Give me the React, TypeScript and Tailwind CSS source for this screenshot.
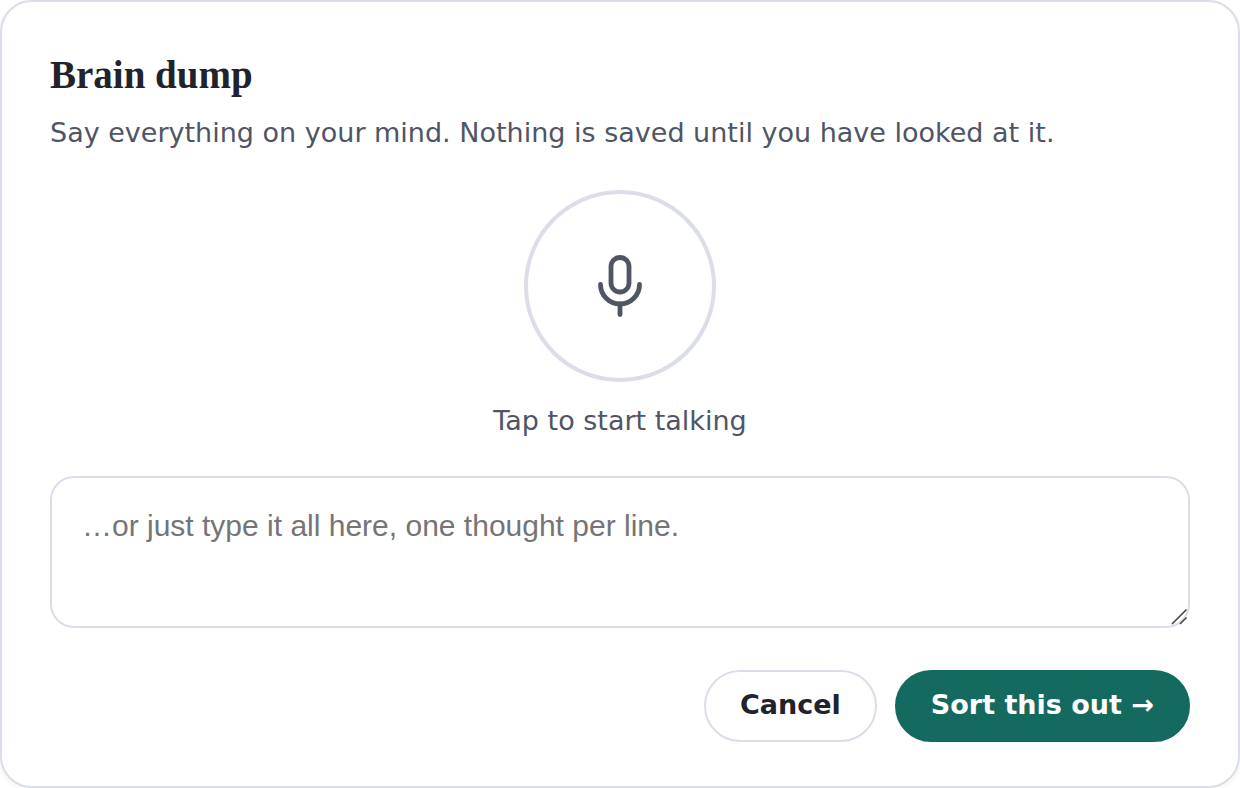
import { useState } from "react";

const MicIcon = () => (
  <svg
    viewBox="0 0 24 24"
    className="size-[72px]"
    fill="none"
    stroke="currentColor"
    strokeWidth="1.6"
    strokeLinecap="round"
    strokeLinejoin="round"
    aria-hidden="true"
  >
    <rect x="9" y="2.5" width="6" height="11.5" rx="3" />
    <path d="M5.5 11.5a6.5 6.5 0 0 0 13 0" />
    <path d="M12 18v3.5" />
  </svg>
);

const ResizeGrip = () => (
  <svg
    viewBox="0 0 18 18"
    className="pointer-events-none absolute right-0.5 bottom-0.5 size-[18px]"
    fill="none"
    stroke="#4a4a4a"
    strokeWidth="1.6"
    aria-hidden="true"
  >
    <path d="M2 16L16.500 1.500M10 16L16.500 9.500" />
  </svg>
);

export default function App() {
  const [text, setText] = useState("");

  return (
    <section className="rounded-[32px] border-2 border-[#dbdee9] bg-white px-12 pt-12 pb-11 font-['DejaVu_Sans',sans-serif] text-[#4f5564] shadow-[0_2px_6px_rgba(30,34,44,0.06)]">
      <h2 className="mb-3 font-['Liberation_Serif',serif] text-[39px] leading-[50px] font-bold text-[#1f232d]">
        Brain dump
      </h2>
      <p className="text-[27px] leading-[42px]">
        Say everything on your mind. Nothing is saved until you have looked at it.
      </p>

      <div className="mt-9 flex flex-col items-center gap-[18px]">
        <button
          type="button"
          aria-label="Start talking"
          className="flex size-48 items-center justify-center rounded-full border-4 border-[#dbdee9] bg-white"
        >
          <MicIcon />
        </button>
        <p className="text-[27px] leading-[42px]">Tap to start talking</p>
      </div>

      <div className="relative mt-[34px]">
        <textarea
          aria-label="Your thoughts, one per line"
          value={text}
          onChange={(e) => setText(e.target.value)}
          placeholder="…or just type it all here, one thought per line."
          className="block h-[152px] w-full resize-y rounded-3xl border-2 border-[#dbdee9] bg-white px-[30px] py-6 font-['Liberation_Sans',sans-serif] text-[30px] leading-[48px] text-[#1f232d] placeholder:text-[#757575] [&::-webkit-resizer]:bg-transparent"
        />
        <ResizeGrip />
      </div>

      <div className="mt-[42px] flex justify-end gap-[18px]">
        <button
          type="button"
          className="h-[72px] rounded-full border-2 border-[#dbdee9] bg-white px-[34px] pb-0.5 text-[27px] font-bold text-[#1f232d]"
        >
          Cancel
        </button>
        <button
          type="button"
          className="h-[72px] rounded-full border-2 border-[#146a5e] bg-[#146a5e] px-[34px] pb-0.5 text-[27px] font-bold text-white"
        >
          Sort this out →
        </button>
      </div>
    </section>
  );
}
